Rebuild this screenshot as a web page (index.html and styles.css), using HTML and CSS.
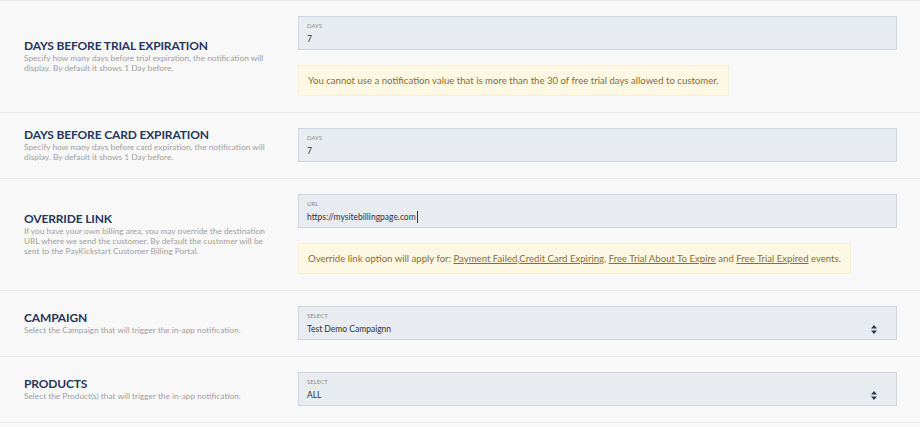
FILE: index.html
```html
<!DOCTYPE html>
<html lang="en">
<head>
    <meta charset="UTF-8">
    <meta name="viewport" content="width=device-width, initial-scale=1.0">
    <title>Notification Settings</title>
    <link rel="stylesheet" href="styles.css">
</head>
<body>
    <div class="settings">
        <div class="row">
            <div class="info">
                <h3>Days Before Trial Expiration</h3>
                <p>Specify how many days before trial expiration, the notification will display. By default it shows 1 Day before.</p>
            </div>
            <div class="field">
                <div class="input">
                    <span class="label">Days</span>
                    <div class="value">7</div>
                </div>
                <div class="alert">You cannot use a notification value that is more than the 30 of free trial days allowed to customer.</div>
            </div>
        </div>

        <div class="row">
            <div class="info">
                <h3>Days Before Card Expiration</h3>
                <p>Specify how many days before card expiration, the notification will display. By default it shows 1 Day before.</p>
            </div>
            <div class="field">
                <div class="input">
                    <span class="label">Days</span>
                    <div class="value">7</div>
                </div>
            </div>
        </div>

        <div class="row">
            <div class="info">
                <h3>Override Link</h3>
                <p>If you have your own billing area, you may override the destination URL where we send the customer. By default the customer will be sent to the PayKickstart Customer Billing Portal.</p>
            </div>
            <div class="field">
                <div class="input">
                    <span class="label">URL</span>
                    <div class="value"><span class="caret">https://mysitebillingpage.com</span></div>
                </div>
                <div class="alert">Override link option will apply for: <a href="#">Payment Failed</a>,<a href="#">Credit Card Expiring</a>, <a href="#">Free Trial About To Expire</a> and <a href="#">Free Trial Expired</a> events.</div>
            </div>
        </div>

        <div class="row">
            <div class="info">
                <h3>Campaign</h3>
                <p>Select the Campaign that will trigger the in-app notification.</p>
            </div>
            <div class="field">
                <div class="input">
                    <span class="label">Select</span>
                    <div class="value">
                        Test Demo Campaignn
                        <svg class="arrows" width="6" height="9" viewBox="0 0 6 9"><path d="M3 0 L6 3.5 H0 Z M3 9 L6 5.5 H0 Z" fill="#2c3550"/></svg>
                    </div>
                </div>
            </div>
        </div>

        <div class="row">
            <div class="info">
                <h3>Products</h3>
                <p>Select the Product(s) that will trigger the in-app notification.</p>
            </div>
            <div class="field">
                <div class="input">
                    <span class="label">Select</span>
                    <div class="value">
                        ALL
                        <svg class="arrows" width="6" height="9" viewBox="0 0 6 9"><path d="M3 0 L6 3.5 H0 Z M3 9 L6 5.5 H0 Z" fill="#2c3550"/></svg>
                    </div>
                </div>
            </div>
        </div>
    </div>
</body>
</html>
```
FILE: styles.css
```css
body {
    margin: 0;
    font-family: Lato, "Open Sans", sans-serif;
    background-color: #f8f8f8;
}
.settings {
    border-top: 1px solid #ebebeb;
}
.row {
    display: flex;
    padding: 15px 23px 16px 24px;
    border-bottom: 1px solid #ebebeb;
}
.info {
    width: 274px;
    display: flex;
    flex-direction: column;
    justify-content: center;
}
.info h3 {
    margin: 0;
    font-size: 12px;
    line-height: 14px;
    font-weight: 700;
    text-transform: uppercase;
    color: #27375c;
    letter-spacing: -0.15px;
}
.info p {
    margin: 0;
    width: 247px;
    font-size: 8.3px;
    line-height: 10px;
    color: #a0a0a0;
}
.field {
    flex: 1;
}
.input {
    height: 34px;
    box-sizing: border-box;
    padding: 5px 19px 0 8px;
    background-color: #e8ebf0;
    border: 1px solid #cfd6df;
}
.input .label {
    display: block;
    font-size: 6px;
    line-height: 8px;
    text-transform: uppercase;
    color: #8e8e8e;
}
.input .value {
    display: flex;
    justify-content: space-between;
    align-items: center;
    margin-top: 3px;
    font-size: 8.5px;
    line-height: 12px;
    color: #333;
}
.caret {
    border-right: 1px solid #333;
    padding-right: 1px;
}
.alert {
    display: inline-block;
    margin-top: 15px;
    padding: 9px 9px;
    font-size: 9.6px;
    line-height: 11px;
    color: #8a6d3b;
    background-color: #fcf8e3;
    border: 1px solid #f8efd0;
    border-radius: 2px;
}
.alert a {
    color: #8a6d3b;
    text-decoration: underline;
}
```
